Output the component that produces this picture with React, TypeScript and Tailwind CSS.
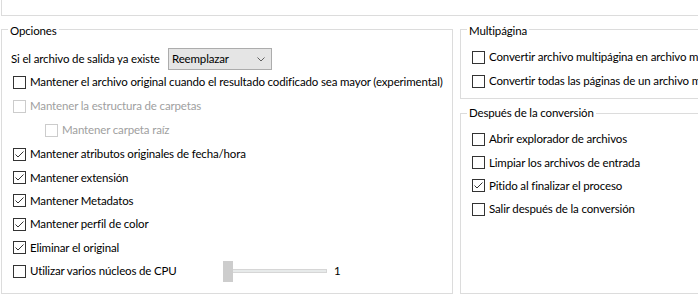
import React from "react";

const font = "font-['Lato','Noto_Sans',sans-serif] text-[11.5px] tracking-[-0.15px]";

function Box({ checked = false, disabled = false }: { checked?: boolean; disabled?: boolean }) {
  return (
    <span
      className={`flex h-[13px] w-[13px] shrink-0 items-center justify-center border bg-white ${
        disabled ? "border-[#cccccc]" : "border-[#333333]"
      }`}
    >
      {checked && (
        <svg width="11" height="11" viewBox="0 0 11 11" fill="none">
          <path d="M1.5 5.5 L4 8 L9.5 2.5" stroke="#333333" strokeWidth="1" />
        </svg>
      )}
    </span>
  );
}

function Check({
  label,
  checked,
  disabled,
  h = "h-[24px]",
  indent = "pl-[11px]",
}: {
  label: string;
  checked?: boolean;
  disabled?: boolean;
  h?: string;
  indent?: string;
}) {
  return (
    <div className={`flex items-center gap-[4px] whitespace-nowrap ${h} ${indent}`}>
      <Box checked={checked} disabled={disabled} />
      <span className={disabled ? "text-[#a0a0a0]" : "text-black"}>{label}</span>
    </div>
  );
}

function Legend({ text, mt = "-mt-[7px]" }: { text: string; mt?: string }) {
  return (
    <div className={`ml-[6px] w-fit bg-white px-[2px] leading-[16px] ${mt}`}>{text}</div>
  );
}

export default function App() {
  return (
    <div className={`h-[301px] w-[698px] overflow-hidden bg-white ${font}`}>
      <div className="ml-[1px] h-[16px] border-b border-l border-[#dcdcdc]" />

      <div className="mt-[13px] flex gap-[7px] pl-[1px]">
        {/* Opciones */}
        <div className="flex h-[265px] w-[452px] shrink-0 flex-col border border-[#dcdcdc]">
          <Legend text="Opciones" />
          <div className="mt-[9px] flex h-[22px] items-center pl-[9px]">
            <span className="w-[157px] whitespace-nowrap">Si el archivo de salida ya existe</span>
            <div className="flex h-[22px] w-[104px] items-center justify-between border border-[#acacac] bg-[#e5e5e5] pl-[3px] pr-[6px]">
              <span>Reemplazar</span>
              <svg width="8" height="5" viewBox="0 0 8 5" fill="none">
                <path d="M0.5 0.5 L4 4 L7.5 0.5" stroke="#606060" strokeWidth="1" />
              </svg>
            </div>
          </div>
          <Check label="Mantener el archivo original cuando el resultado codificado sea mayor (experimental)" />
          <Check label="Mantener la estructura de carpetas" disabled />
          <Check label="Mantener carpeta raíz" disabled indent="pl-[43px]" />
          <Check label="Mantener atributos originales de fecha/hora" checked />
          <Check label="Mantener extensión" checked h="h-[23px]" />
          <Check label="Mantener Metadatos" checked h="h-[23px]" />
          <Check label="Mantener perfil de color" checked />
          <Check label="Eliminar el original" checked h="h-[23px]" />
          <div className="flex h-[24px] items-center">
            <div className="w-[221px]">
              <Check label="Utilizar varios núcleos de CPU" />
            </div>
            <div className="relative flex h-[21px] w-[104px] items-center">
              <div className="h-[4px] w-full border border-[#d6d6d6] bg-[#e7eaea]" />
              <div className="absolute left-0 top-0 h-[21px] w-[10px] bg-[#cdcdcd]" />
            </div>
            <span className="ml-[7px]">1</span>
          </div>
        </div>

        {/* Right column */}
        <div className="flex w-[400px] shrink-0 flex-col">
          <div className="flex h-[70px] flex-col border border-[#dcdcdc]">
            <Legend text="Multipágina" />
            <div className="mt-[6px]">
              <Check label="Convertir archivo multipágina en archivo multipágina" />
              <Check label="Convertir todas las páginas de un archivo multipágina" />
            </div>
          </div>

          <div className="mt-[14px] flex h-[181px] flex-col border border-[#dcdcdc]">
            <Legend text="Después de la conversión" mt="-mt-[9px]" />
            <div className="mt-[6px]">
              <Check label="Abrir explorador de archivos" />
              <Check label="Limpiar los archivos de entrada" h="h-[23px]" />
              <Check label="Pitido al finalizar el proceso" checked h="h-[23px]" />
              <Check label="Salir después de la conversión" />
            </div>
          </div>
        </div>
      </div>
    </div>
  );
}
